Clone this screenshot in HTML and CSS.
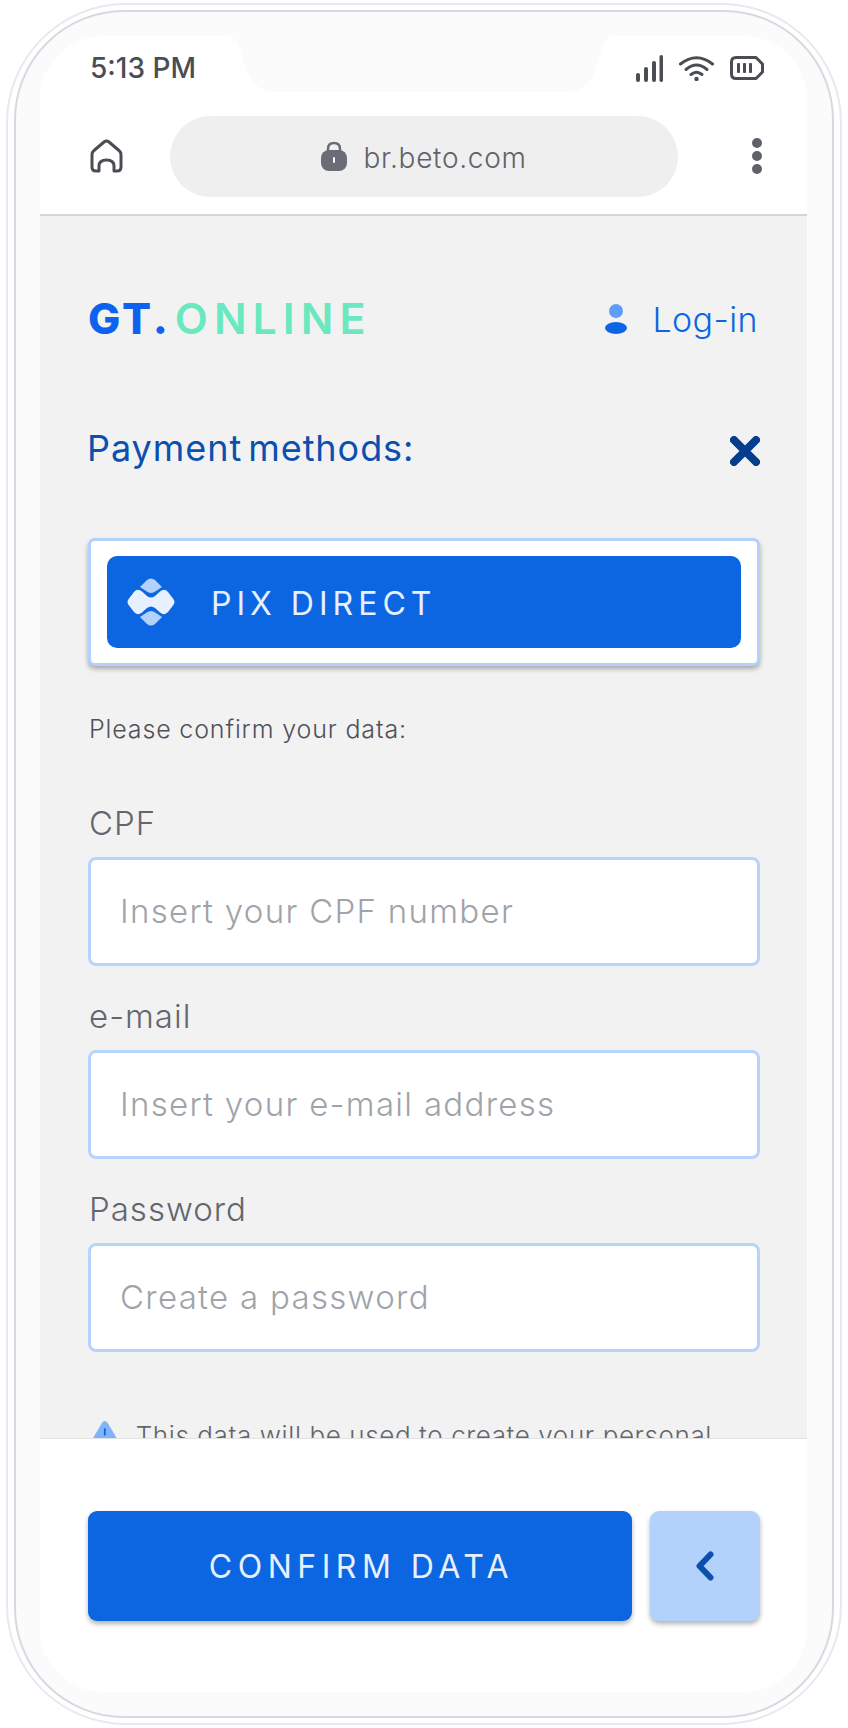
FILE: index.html
```html
<!DOCTYPE html>
<html lang="en">
<head>
  <meta charset="UTF-8">
  <meta name="viewport" content="width=device-width, initial-scale=1.0">
  <title>GT.Online payment</title>
  <link rel="stylesheet" href="styles.css">
</head>
<body>
  <div class="ring-outer">
    <div class="ring-inner">
      <div class="screen">
        <svg class="notch" width="384" height="56" viewBox="0 0 384 56"><path d="M0 0 C8 2 10 10 13 20 C17 40 28 56 44 56 H340 C356 56 367 40 371 20 C374 10 376 2 384 0Z" fill="#fbfbfc"/></svg>

        <!-- Status bar -->
        <div class="status-bar">
          <span class="time">5:13 PM</span>
          <div class="status-icons">
            <svg width="27" height="27" viewBox="0 0 27 27"><g fill="#4a4d54"><rect x="0" y="18" width="4" height="9" rx="2"/><rect x="8" y="12" width="4" height="15" rx="2"/><rect x="16" y="6" width="4" height="21" rx="2"/><rect x="23.500" y="0" width="3.500" height="27" rx="1.700"/></g></svg>
            <svg width="35" height="26" viewBox="0 0 35 26"><g fill="none" stroke="#4a4d54" stroke-width="3" stroke-linecap="round"><path d="M1.500 9 Q17.500 -3.500 33.500 9"/><path d="M7 14.500 Q17.500 5.500 28 14.500"/><path d="M12 19.500 Q17.500 15 23 19.500"/></g><circle cx="17.500" cy="24" r="2.200" fill="#4a4d54"/></svg>
            <svg width="34" height="24" viewBox="0 0 34 24"><g fill="none" stroke="#4a4d54" stroke-width="3"><path d="M6 1.500 H26 L32.500 8 V16 L26 22.500 H6 Q1.500 22.500 1.500 18 V6 Q1.500 1.500 6 1.500Z" stroke-linejoin="round"/></g><g fill="#4a4d54"><rect x="7" y="7" width="3" height="10" rx="1"/><rect x="13" y="7" width="3" height="10" rx="1"/><rect x="19" y="7" width="3" height="10" rx="1"/></g></svg>
          </div>
        </div>

        <!-- Browser bar -->
        <div class="browser-bar">
          <svg class="home-icon" width="33" height="34" viewBox="0 0 33 34"><path d="M2 16 Q2 13 4 11.500 L14 3 Q16.500 1 19 3 L29 11.500 Q31 13 31 16 V28 Q31 32 27 32 H24 V27 Q24 21 16.500 21 Q9 21 9 27 V32 H6 Q2 32 2 28Z" fill="none" stroke="#4a4d54" stroke-width="3" stroke-linejoin="round"/></svg>
          <div class="url-pill">
            <svg width="26" height="30" viewBox="0 0 26 30"><path d="M7 11 V8 Q7 2 13 2 Q19 2 19 8 V11" fill="none" stroke="#6a6d75" stroke-width="2.500"/><rect x="0" y="9" width="26" height="21" rx="8" fill="#6a6d75"/><rect x="12" y="16" width="2" height="6" rx="1" fill="#fff"/></svg>
            <span class="url-text">br.beto.com</span>
          </div>
          <div class="dots"><i></i><i></i><i></i></div>
        </div>

        <!-- Page content -->
        <div class="page">
          <div class="top-row">
            <div class="logo"><span class="logo-gt">GT.</span><span class="logo-online">ONLINE</span></div>
            <a class="login" href="#">
              <svg width="22" height="30" viewBox="0 0 22 30"><circle cx="11" cy="7" r="7" fill="#5e9dfa"/><ellipse cx="11" cy="24" rx="11" ry="6" fill="#0c66e4"/></svg>
              <span>Log-in</span>
            </a>
          </div>

          <div class="title-row">
            <h1 class="title">Payment methods:</h1>
            <svg width="30" height="30" viewBox="0 0 30 30"><path d="M4 4 L26 26 M26 4 L4 26" stroke="#043d8c" stroke-width="8" stroke-linecap="round"/></svg>
          </div>

          <div class="method-card">
            <div class="method-btn">
              <svg width="48" height="48" viewBox="0 0 48 48">
                <path d="M20 2 Q24 -1 28 2 L35 9 L29 13 Q24 17 19 13 L13 9 Z" fill="#b2d2fb"/>
                <path d="M20 46 Q24 49 28 46 L35 39 L29 35 Q24 31 19 35 L13 39 Z" fill="#b2d2fb"/>
                <path d="M2 20.500 L7 14 Q10.500 10 15 13.500 L20 18 Q24 21 28 18 L33 13.500 Q37.500 10 41 14 L46 20.500 Q49 24 46 27.500 L41 34 Q37.500 38 33 34.500 L28 30 Q24 27 20 30 L15 34.500 Q10.500 38 7 34 L2 27.500 Q-1 24 2 20.500Z" fill="#e6f0fe"/>
              </svg>
              <span>PIX DIRECT</span>
            </div>
          </div>

          <p class="confirm-text">Please confirm your data:</p>

          <div class="fields">
            <div class="field">
              <label class="field-label">CPF</label>
              <input class="input-field" type="text" placeholder="Insert your CPF number">
            </div>
            <div class="field">
              <label class="field-label">e-mail</label>
              <input class="input-field" type="text" placeholder="Insert your e-mail address">
            </div>
            <div class="field">
              <label class="field-label">Password</label>
              <input class="input-field" type="text" placeholder="Create a password">
            </div>
          </div>

          <div class="notice">
            <svg width="26" height="24" viewBox="0 0 26 24"><path d="M10 3 Q13 -1 16 3 L25 18 Q27 23 22 23 H4 Q-1 23 1 18Z" fill="#80b4f9"/><rect x="12" y="9" width="2" height="8" rx="1" fill="#0c66e4"/></svg>
            <span>This data will be used to create your personal account</span>
          </div>
        </div>

        <!-- Footer buttons -->
        <div class="footer">
          <button class="button-confirm">CONFIRM DATA</button>
          <button class="button-back">
            <svg width="18" height="30" viewBox="0 0 18 30"><path d="M14.500 3.500 L3.500 15 L14.500 26.500" fill="none" stroke="#0b50ae" stroke-width="6" stroke-linecap="round" stroke-linejoin="round"/></svg>
          </button>
        </div>
      </div>
    </div>
  </div>
</body>
</html>
```

FILE: styles.css
```css
/* General */
* {
  box-sizing: border-box;
}

body {
  margin: 0;
  background-color: #fff;
  font-family: "Inter", "Liberation Sans", sans-serif;
  font-weight: 300;
}

/* Phone frame */
.ring-outer {
  width: 836px;
  height: 1722px;
  margin: 3px 6px;
  padding: 5px 6px;
  border: 2px solid #e8e8ee;
  border-radius: 120px;
}

.ring-inner {
  height: 100%;
  padding: 24px 25px 24px 24px;
  border: 2px solid #d8d8e2;
  border-radius: 110px;
  background-color: #fbfbfc;
}

.screen {
  position: relative;
  display: flex;
  flex-direction: column;
  height: 100%;
  border-radius: 64px;
  background-color: #fff;
  overflow: hidden;
}

.notch {
  position: absolute;
  top: 0;
  left: 189px;
}

/* Status bar */
.status-bar {
  display: flex;
  justify-content: space-between;
  align-items: center;
  flex-shrink: 0;
  height: 64px;
  padding: 0 43px 0 50px;
}

.time {
  position: relative;
  font-size: 28px;
  font-weight: 500;
  color: #4a4d54;
}

.status-icons {
  position: relative;
  display: flex;
  align-items: center;
  gap: 16px;
}

/* Browser bar */
.browser-bar {
  display: flex;
  align-items: center;
  flex-shrink: 0;
  height: 116px;
  padding: 0 45px 2px 50px;
  border-bottom: 2px solid #d5d5dc;
}

.home-icon {
  margin-right: 47px;
}

.url-pill {
  display: flex;
  justify-content: center;
  align-items: center;
  gap: 16px;
  width: 508px;
  height: 81px;
  border-radius: 41px;
  background-color: #efefef;
}

.url-text {
  padding-top: 3px;
  font-size: 28px;
  letter-spacing: 0.7px;
  color: #5f636b;
}

.dots {
  display: flex;
  flex-direction: column;
  gap: 3px;
  margin-left: auto;
}

.dots i {
  display: block;
  width: 10px;
  height: 10px;
  border-radius: 50%;
  background-color: #5f626b;
}

/* Page */
.page {
  flex: 1;
  min-height: 0;
  padding: 72px 47px 0 48px;
  background-color: #f2f2f2;
  overflow: hidden;
}

.top-row {
  display: flex;
  justify-content: space-between;
  align-items: center;
  height: 60px;
}

.logo {
  font-size: 43px;
  font-weight: 800;
  letter-spacing: 3px;
}

.logo-gt {
  color: #0e62f0;
}

.logo-online {
  margin-left: 4px;
  font-weight: 600;
  letter-spacing: 6px;
  color: #6ae8bf;
}

.login {
  display: flex;
  align-items: center;
  gap: 25px;
  padding: 2px 2px 0 0;
  font-size: 34px;
  letter-spacing: 0.4px;
  color: #0c66e4;
  text-decoration: none;
}

.title-row {
  display: flex;
  justify-content: space-between;
  align-items: center;
  height: 50px;
  margin-top: 78px;
}

.title {
  margin: -6px 0 0 -1px;
  font-size: 36px;
  font-weight: 400;
  letter-spacing: 0.95px;
  word-spacing: -5px;
  color: #0b50ae;
}

/* Payment method */
.method-card {
  height: 128px;
  margin-top: 62px;
  padding: 15px 16px;
  border: 3px solid #b2d2fb;
  border-radius: 7px;
  background-color: #fff;
  box-shadow: 0 3px 5px rgba(0, 0, 0, 0.3);
}

.method-btn {
  display: flex;
  align-items: center;
  gap: 36px;
  height: 100%;
  padding-left: 20px;
  border-radius: 10px;
  background-color: #0c66e2;
  font-size: 32px;
  font-weight: 400;
  letter-spacing: 5px;
  color: #e6f0fe;
}

.method-btn span {
  padding-top: 3px;
}

.confirm-text {
  height: 30px;
  margin: 48px 0 0 1px;
  font-size: 25px;
  line-height: 30px;
  letter-spacing: 0.85px;
  color: #4e5157;
}

/* Fields */
.fields {
  display: flex;
  flex-direction: column;
  gap: 33px;
  margin-top: 62px;
}

.field-label {
  display: block;
  height: 40px;
  margin: 0 0 11px 1px;
  font-size: 33px;
  line-height: 34px;
  letter-spacing: 1px;
  color: #63666d;
}

.input-field {
  display: block;
  width: 100%;
  height: 109px;
  padding: 0 29px 2px;
  border: 3px solid #b6d4fc;
  border-radius: 8px;
  background-color: #fff;
  font-family: inherit;
  font-size: 33px;
  font-weight: 300;
  letter-spacing: 1.3px;
}

.input-field::placeholder {
  color: #a0a3a9;
  opacity: 1;
}

.notice {
  display: flex;
  align-items: flex-start;
  gap: 19px;
  margin-top: 67px;
  padding-left: 5px;
  font-size: 26px;
  line-height: 34px;
  letter-spacing: 0.6px;
  color: #63666d;
}

/* Footer */
.footer {
  display: flex;
  gap: 18px;
  flex-shrink: 0;
  height: 254px;
  padding: 72px 47px 0 48px;
  border-top: 1px solid #e2e2e2;
}

.footer button {
  height: 110px;
  border: none;
  border-radius: 9px;
  cursor: pointer;
}

.button-confirm {
  flex: 1;
  padding-left: 9px;
  background-color: #0c66e2;
  box-shadow: 0 3px 5px rgba(0, 0, 0, 0.3);
  font-family: inherit;
  font-size: 32px;
  font-weight: 400;
  letter-spacing: 5.5px;
  color: #e6f0fe;
}

.button-back {
  display: flex;
  justify-content: center;
  align-items: center;
  width: 110px;
  background-color: #b2d2fb;
  box-shadow: 0 3px 5px rgba(0, 0, 0, 0.3);
}
```
